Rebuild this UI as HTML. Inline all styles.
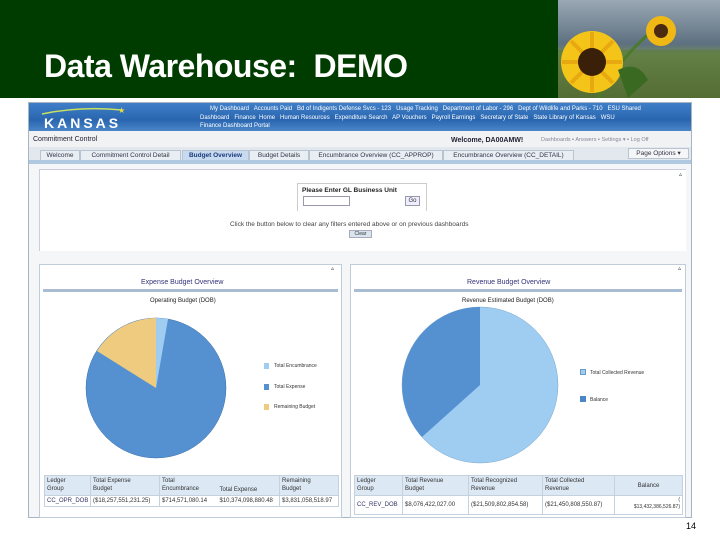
<!DOCTYPE html>
<html><head><meta charset="utf-8"><style>
*{margin:0;padding:0;box-sizing:border-box}
body{width:720px;height:540px;position:relative;background:#fff;font-family:"Liberation Sans",sans-serif;overflow:hidden}
.a{position:absolute}
.t{font-size:6px;color:#333;white-space:nowrap}
.tab{position:absolute;top:150px;height:11px;border:1px solid #b8c4d0;background:#e8eef4;font-size:6.5px;color:#334;text-align:center;line-height:9px;white-space:nowrap}
table{border-collapse:collapse;font-size:6px;line-height:8px;color:#333;table-layout:fixed}
td{border:1px solid #c5d2de;padding:1px 2px;vertical-align:top;white-space:nowrap}
tr.h td{background:#dce8f4;height:20px}
</style></head><body>
<div class="a" style="left:0;top:0;width:558px;height:98px;background:#003c00"></div>
<div class="a" style="left:44px;top:48px;font-size:32px;color:#fff;font-weight:bold;letter-spacing:-0.5px;font-family:'Liberation Sans',sans-serif">Data Warehouse:&nbsp; DEMO</div>
<svg class="a" style="left:558px;top:0" width="162" height="98">
<defs><linearGradient id="sk" x1="0" y1="0" x2="0" y2="1"><stop offset="0" stop-color="#9aa8b4"/><stop offset="0.45" stop-color="#5d7080"/><stop offset="0.55" stop-color="#6f8a5a"/><stop offset="1" stop-color="#4a5a2a"/></linearGradient></defs>
<rect width="162" height="98" fill="url(#sk)"/>
<rect x="0" y="50" width="162" height="48" fill="#5c7a3a" opacity="0.6"/>
<path d="M40 98 Q60 60 95 30" stroke="#4a7a2a" stroke-width="3" fill="none"/>
<circle cx="103" cy="31" r="15" fill="#f0b814"/><circle cx="103" cy="31" r="7" fill="#4a2a10"/>
<circle cx="34" cy="62" r="31" fill="#f4c418"/>
<g stroke="#e8a810" stroke-width="4"><path d="M4 62h60M34 32v60M13 41l42 42M55 41l-42 42"/></g>
<circle cx="34" cy="62" r="14" fill="#3a2008"/>
<path d="M60 70 Q80 60 90 80 L70 98 Z" fill="#3a6a22"/>
</svg>
<div class="a" style="left:28px;top:102px;width:664px;height:416px;border:1px solid #a8b4c0;background:#f4f6f8"></div>
<div class="a" style="left:29px;top:103px;width:662px;height:28px;background:linear-gradient(180deg,#3f7fc8,#2a66b0 60%,#4a86c8)"></div>
<svg class="a" style="left:40px;top:104px" width="120" height="26"><path d="M2 10 Q40 2 82 6" stroke="#c8e060" stroke-width="1.5" fill="none"/><text x="78" y="9" font-size="8" fill="#e8e040">★</text><text x="4" y="24" font-family="Liberation Sans" font-weight="bold" font-size="14" fill="#fff" letter-spacing="3">KANSAS</text></svg>
<div class="a t" style="left:200px;top:105px;color:#fff;font-size:6px;line-height:8.5px">&nbsp;&nbsp;&nbsp;&nbsp;&nbsp;&nbsp;My Dashboard &nbsp; Accounts Paid &nbsp; Bd of Indigents Defense Svcs - 123 &nbsp; Usage Tracking &nbsp; Department of Labor - 296 &nbsp; Dept of Wildlife and Parks - 710 &nbsp; ESU Shared<br>Dashboard &nbsp; Finance &nbsp;Home &nbsp; Human Resources &nbsp; Expenditure Search &nbsp; AP Vouchers &nbsp; Payroll Earnings &nbsp; Secretary of State &nbsp; State Library of Kansas &nbsp; WSU<br>Finance Dashboard Portal</div>
<div class="a" style="left:29px;top:131px;width:662px;height:16px;background:#f0f2f4"></div>
<div class="a t" style="left:33px;top:136px;font-size:7px;color:#223">Commitment Control</div>
<div class="a t" style="left:451px;top:137px;font-size:7px;font-weight:bold;color:#223">Welcome, DA00AMW!</div>
<div class="a t" style="left:541px;top:137px;font-size:5.5px;color:#889">Dashboards ▪ Answers ▪ Settings ▾ ▪ Log Off</div>
<div class="a" style="left:29px;top:147px;width:662px;height:16px;background:#e2e8ee"></div>
<div class="tab" style="left:40px;width:40px">Welcome</div>
<div class="tab" style="left:80px;width:101px">Commitment Control Detail</div>
<div class="tab" style="left:182px;width:67px;background:#c8daf0;color:#1a3a7a;font-weight:bold">Budget Overview</div>
<div class="tab" style="left:249px;width:60px">Budget Details</div>
<div class="tab" style="left:309px;width:134px">Encumbrance Overview (CC_APPROP)</div>
<div class="tab" style="left:443px;width:131px">Encumbrance Overview (CC_DETAIL)</div>
<div class="tab" style="left:628px;top:148px;width:61px;background:#f4f6f8">Page Options ▾</div>
<div class="a" style="left:29px;top:160px;width:662px;height:4px;background:#b0c8e0"></div>
<div class="a" style="left:39px;top:169px;width:647px;height:82px;background:#fff;border-top:1px solid #ccd;border-left:1px solid #ccd"></div>
<div class="a t" style="left:679px;top:171px">▵</div>
<div class="a" style="left:297px;top:183px;width:130px;height:28px;border:1px solid #ccc;border-bottom:none"></div>
<div class="a t" style="left:302px;top:187px;font-size:6.5px;font-weight:bold;color:#222">Please Enter GL Business Unit</div>
<div class="a" style="left:303px;top:196px;width:47px;height:10px;border:1px solid #99a"></div>
<div class="a t" style="left:405px;top:196px;width:15px;height:10px;border:1px solid #99a;background:#eef;text-align:center;line-height:8px">Go</div>
<div class="a t" style="left:230px;top:221px;font-size:6.5px;color:#444">Click the button below to clear any filters entered above or on previous dashboards</div>
<div class="a t" style="left:349px;top:230px;width:23px;height:8px;background:#d8e4ee;border:1px solid #aab;text-align:center;font-size:5px;line-height:6px">Clear</div>
<div class="a" style="left:39px;top:264px;width:303px;height:254px;background:#fff;border:1px solid #c0ccd8"></div>
<div class="a t" style="left:331px;top:265px">▵</div>
<div class="a t" style="left:141px;top:279px;font-size:7px;color:#33337a">Expense Budget Overview</div>
<div class="a" style="left:43px;top:289px;width:295px;height:3px;background:#a8bcd4"></div>
<div class="a t" style="left:150px;top:298px;font-size:6px;color:#222">Operating Budget (DOB)</div>
<svg class="a" style="left:80px;top:312px" width="150" height="150">
<circle cx="76" cy="76" r="70" fill="#5591d0" stroke="#3a6ea8" stroke-width="0.5"/>
<path d="M76 76 L76 6 A70 70 0 0 1 88 7 Z" fill="#9fcdf2"/>
<path d="M76 76 L17 39 A70 70 0 0 1 76 6 Z" fill="#eecb7e"/>
</svg>
<div class="a" style="left:264px;top:363px;width:5px;height:6px;background:#9fcdf2"></div>
<div class="a" style="left:264px;top:384px;width:5px;height:6px;background:#5591d0"></div>
<div class="a" style="left:264px;top:404px;width:5px;height:6px;background:#eecb7e"></div>
<div class="a t" style="left:274px;top:363px;font-size:5px">Total Encumbrance</div>
<div class="a t" style="left:274px;top:384px;font-size:5px">Total Expense</div>
<div class="a t" style="left:274px;top:404px;font-size:5px">Remaining Budget</div>
<table class="a" style="left:44px;top:475px;width:294px">
<colgroup><col style="width:46px"><col style="width:69px"><col style="width:58px"><col style="width:62px"><col style="width:59px"></colgroup>
<tr class="h"><td>Ledger<br>Group</td><td>Total Expense<br>Budget</td><td style="border-right:none">Total<br>Encumbrance</td><td style="border-left:none;vertical-align:bottom">Total Expense</td><td>Remaining<br>Budget</td></tr>
<tr><td style="color:#336">CC_OPR_DOB</td><td>($18,257,551,231.25)</td><td style="border-right:none">$714,571,080.14</td><td style="border-left:none">$10,374,098,880.48</td><td>$3,831,058,518.97</td></tr>
</table>
<div class="a" style="left:350px;top:264px;width:336px;height:254px;background:#fff;border:1px solid #c0ccd8"></div>
<div class="a t" style="left:678px;top:265px">▵</div>
<div class="a t" style="left:467px;top:279px;font-size:7px;color:#33337a">Revenue Budget Overview</div>
<div class="a" style="left:354px;top:289px;width:328px;height:3px;background:#a8bcd4"></div>
<div class="a t" style="left:462px;top:298px;font-size:6px;color:#222">Revenue Estimated Budget (DOB)</div>
<svg class="a" style="left:400px;top:306px" width="160" height="160">
<ellipse cx="80" cy="79" rx="78" ry="78" fill="#9fcdf2" stroke="#7aa8cc" stroke-width="0.5"/>
<path d="M80 79 L80 1 A78 78 0 0 0 22 131 Z" fill="#5591d0"/>
</svg>
<div class="a" style="left:580px;top:369px;width:6px;height:6px;background:#9fcdf2;border:1px solid #6a9ac8"></div>
<div class="a" style="left:580px;top:396px;width:6px;height:6px;background:#4a86c8"></div>
<div class="a t" style="left:590px;top:370px;font-size:5px">Total Collected Revenue</div>
<div class="a t" style="left:590px;top:397px;font-size:5px">Balance</div>
<table class="a" style="left:354px;top:475px;width:328px">
<colgroup><col style="width:48px"><col style="width:66px"><col style="width:74px"><col style="width:72px"><col style="width:68px"></colgroup>
<tr class="h"><td>Ledger<br>Group</td><td>Total Revenue<br>Budget</td><td>Total Recognized<br>Revenue</td><td>Total Collected<br>Revenue</td><td style="text-align:center;vertical-align:middle">Balance</td></tr>
<tr style="height:19px"><td style="color:#336;vertical-align:middle">CC_REV_DOB</td><td style="vertical-align:middle">$8,076,422,027.00</td><td style="vertical-align:middle">($21,509,802,854.58)</td><td style="vertical-align:middle">($21,450,808,550.87)</td><td style="font-size:5px;line-height:7px;text-align:right">(<br>$13,432,386,526.87)</td></tr>
</table>
<div class="a" style="left:686px;top:521px;font-size:9px;color:#000">14</div>
</body></html>
